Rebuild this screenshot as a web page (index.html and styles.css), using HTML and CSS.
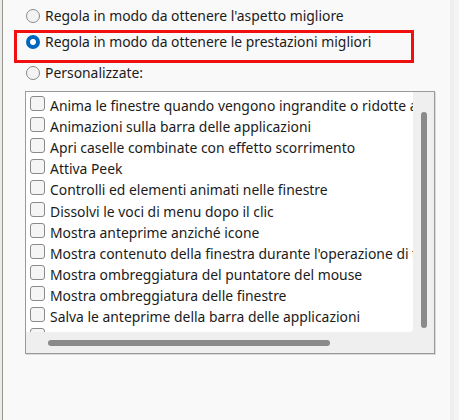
FILE: index.html
```html
<!DOCTYPE html>
<html lang="it">
<head>
<meta charset="utf-8">
<link rel="stylesheet" href="styles.css">
</head>
<body>
<div class="window">
  <div class="edge-left"></div>
  <div class="main">
    <div class="radio-row first">
      <span class="radio"></span>
      <span class="label">Regola in modo da ottenere l'aspetto migliore</span>
    </div>
    <div class="highlight">
      <div class="radio-row inner">
        <span class="radio checked"></span>
        <span class="label">Regola in modo da ottenere le prestazioni migliori</span>
      </div>
    </div>
    <div class="radio-row">
      <span class="radio"></span>
      <span class="label">Personalizzate:</span>
    </div>
    <div class="listbox">
      <div class="items">
        <div class="item"><span class="check"></span><span class="text">Anima le finestre quando vengono ingrandite o ridotte ad icona</span></div>
        <div class="item"><span class="check"></span><span class="text">Animazioni sulla barra delle applicazioni</span></div>
        <div class="item"><span class="check"></span><span class="text">Apri caselle combinate con effetto scorrimento</span></div>
        <div class="item"><span class="check"></span><span class="text">Attiva Peek</span></div>
        <div class="item"><span class="check"></span><span class="text">Controlli ed elementi animati nelle finestre</span></div>
        <div class="item"><span class="check"></span><span class="text">Dissolvi le voci di menu dopo il clic</span></div>
        <div class="item"><span class="check"></span><span class="text">Mostra anteprime anziché icone</span></div>
        <div class="item"><span class="check"></span><span class="text">Mostra contenuto della finestra durante l'operazione di trascinamento</span></div>
        <div class="item"><span class="check"></span><span class="text">Mostra ombreggiatura del puntatore del mouse</span></div>
        <div class="item"><span class="check"></span><span class="text">Mostra ombreggiatura delle finestre</span></div>
        <div class="item"><span class="check"></span><span class="text">Salva le anteprime della barra delle applicazioni</span></div>
        <div class="item"><span class="check"></span><span class="text">Smussa gli angoli dei caratteri dello schermo</span></div>
      </div>
      <div class="vscroll"><div class="vthumb"></div></div>
      <div class="hscroll"><div class="hthumb"></div></div>
      <div class="corner"></div>
    </div>
  </div>
  <div class="edge-right"></div>
</div>
</body>
</html>
```

FILE: styles.css
```css
html, body {
  margin: 0;
  padding: 0;
}
body {
  width: 459px;
  height: 420px;
  overflow: hidden;
  background: #f9f9f9;
  font-family: "Noto Sans", "Open Sans", "DejaVu Sans", sans-serif;
  font-size: 13.9px;
  color: #1b1b1b;
}
.window {
  display: flex;
  height: 420px;
}
.edge-left {
  width: 3px;
  flex: none;
  background: linear-gradient(to right, #ebebeb 0 2px, #9c9691 2px 3px);
}
.edge-right {
  width: 9px;
  flex: none;
  background: linear-gradient(to right, #eeeeee 0 4px, #f4f4f4 4px);
}
.main {
  flex: 1;
  display: flex;
  flex-direction: column;
}
.radio-row {
  display: flex;
  align-items: center;
  height: 19px;
  padding-left: 23px;
  gap: 5px;
  white-space: nowrap;
}
.radio-row.first {
  margin-top: 6px;
}
.highlight {
  margin: 5px 0 0 11px;
  width: 394px;
  height: 27px;
  border: 3px solid #f01010;
}
.radio-row.inner {
  height: 17px;
  padding-left: 9px;
}
.radio {
  width: 12px;
  height: 12px;
  border: 1px solid #8a8a8a;
  border-radius: 50%;
  background: #f3f3f3;
  flex: none;
}
.radio.checked {
  width: 14px;
  height: 14px;
  border: none;
  background: radial-gradient(circle, #ffffff 0 2.7px, #0067c0 3.3px);
}
.label {
  line-height: 19px;
}
.listbox {
  margin: 9px 0 0 22px;
  width: 408px;
  height: 261px;
  border: 1px solid #9a9a9a;
  box-shadow: 1px 1px 0 #dadada;
  background: #efefef;
  display: grid;
  grid-template-columns: 387px 21px;
  grid-template-rows: 240px 21px;
}
.items {
  background: #ffffff;
  overflow: hidden;
  border-bottom-right-radius: 4px;
  padding-top: 1px;
}
.item {
  display: flex;
  align-items: center;
  height: 21.1px;
  padding-left: 4px;
  gap: 5px;
  white-space: nowrap;
}
.item .text {
  line-height: 19px;
  margin-top: 4px;
}
.check {
  width: 13px;
  height: 13px;
  border: 1px solid #8a8a8a;
  border-radius: 3px;
  background: #f5f5f5;
  flex: none;
}
.vthumb {
  margin: 20px 0 0 8px;
  width: 6px;
  height: 216px;
  border-radius: 3px;
  background: #8a8a8a;
}
.hthumb {
  margin: 8px 0 0 22px;
  width: 282px;
  height: 6px;
  border-radius: 3px;
  background: #8a8a8a;
}
```
